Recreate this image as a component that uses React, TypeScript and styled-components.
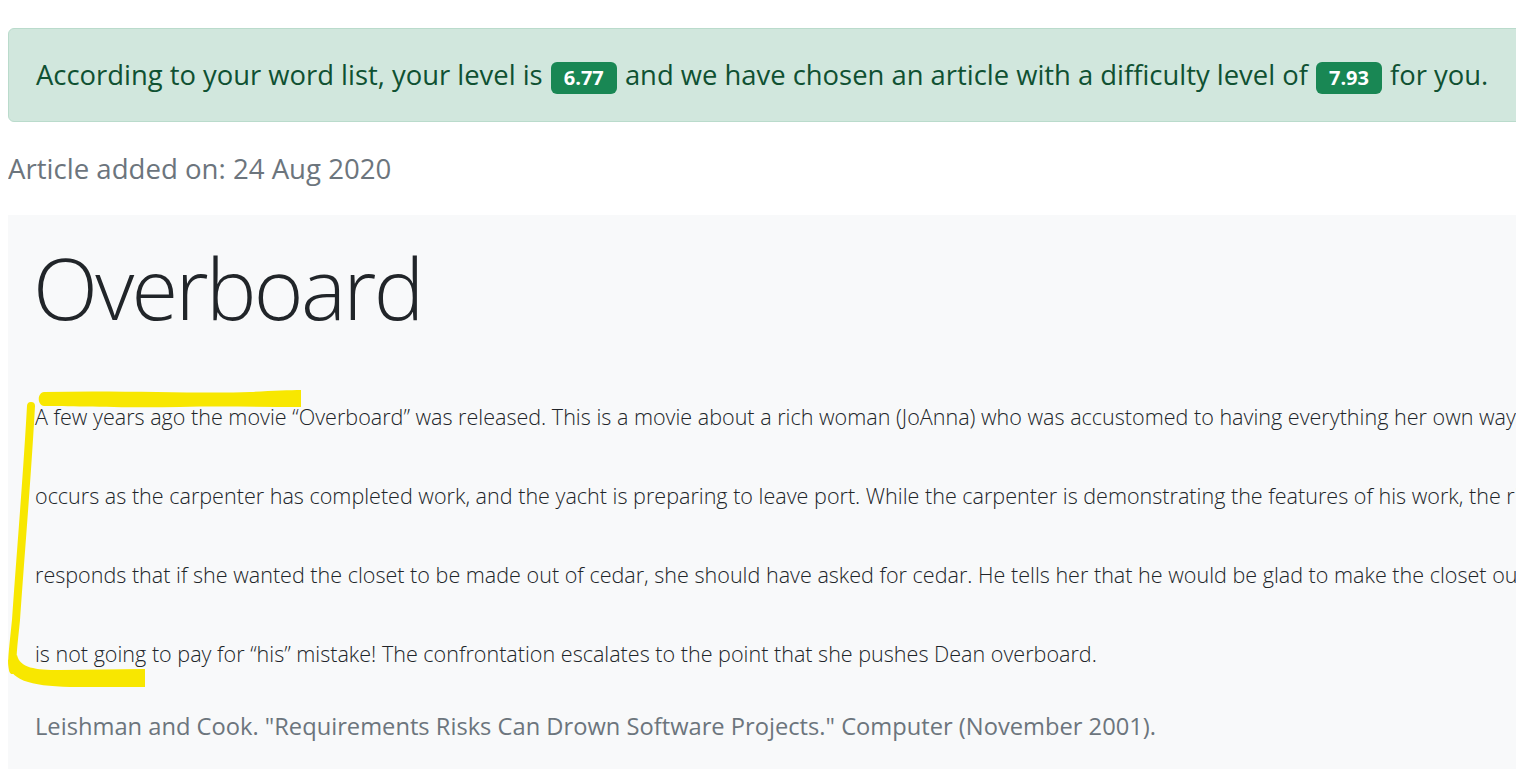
import styled, { createGlobalStyle } from 'styled-components';

const GlobalStyle = createGlobalStyle`
  html, body {
    overflow: hidden;
    scrollbar-width: none;
  }
  html {
    width: 100%;
  }
  body {
    margin: 8px 0 0 8px;
    background: #fff;
    font-family: "Open Sans", "Noto Sans", sans-serif;
  }
`;

const Frame = styled.div`
  width: 100vw;
  height: calc(100vh - 8px);
  overflow: hidden;
`;

const Page = styled.div`
  position: relative;
  width: 1640px;
  padding-top: 20px;
`;

const Alert = styled.div`
  background-color: #d1e7dd;
  border: 1px solid #badbcc;
  border-radius: 6px;
  color: #0f5132;
  padding: 26px 27px;
  font-size: 27.4px;
  line-height: 40px;
  white-space: nowrap;
`;

const Badge = styled.span`
  display: inline-block;
  background-color: #198754;
  color: #fff;
  font-weight: 700;
  font-size: 20px;
  line-height: 32px;
  height: 32px;
  padding: 0 13px;
  border-radius: 6px;
  vertical-align: middle;
  margin: 0 1px;
`;

const DateLine = styled.div`
  color: #6c757d;
  font-size: 27.6px;
  line-height: 40px;
  margin: 26px 0 27px;
`;

const ArticlePanel = styled.div`
  background-color: #f8f9fa;
  padding: 18px 27px 60px;
  min-height: 600px;
`;

const Title = styled.h1`
  margin: 0 0 0 -2px;
  font-weight: 300;
  font-size: 85px;
  letter-spacing: -2.7px;
  line-height: 109px;
  color: #212529;
`;

const Body = styled.p`
  margin: 35px 0 0;
  font-weight: 300;
  font-size: 21.55px;
  line-height: 79px;
  color: #212529;
  white-space: nowrap;
`;

const Source = styled.p`
  margin: 17px 0 0;
  font-size: 23.7px;
  line-height: 33px;
  color: #6c757d;
`;

const Marker = styled.svg`
  position: absolute;
  left: -8px;
  top: -8px;
  width: 320px;
  height: 700px;
  pointer-events: none;
`;

const lines = [
  'A few years ago the movie “Overboard” was released. This is a movie about a rich woman (JoAnna) who was accustomed to having everything her own way.',
  'occurs as the carpenter has completed work, and the yacht is preparing to leave port. While the carpenter is demonstrating the features of his work, the rich',
  'responds that if she wanted the closet to be made out of cedar, she should have asked for cedar. He tells her that he would be glad to make the closet out',
  'is not going to pay for “his” mistake! The confrontation escalates to the point that she pushes Dean overboard.',
];

export default function App() {
  return (
    <>
      <GlobalStyle />
      <Frame>
        <Page>
          <Alert>
            According to your word list, your level is <Badge>6.77</Badge> and we have chosen an article with a
            difficulty level of <Badge>7.93</Badge> for you.
          </Alert>
          <DateLine>Article added on: 24 Aug 2020</DateLine>
          <ArticlePanel>
            <Title>Overboard</Title>
            <Body>
              {lines.map((l, i) => (
                <span key={i}>
                  {l}
                  {i < lines.length - 1 && <br />}
                </span>
              ))}
            </Body>
            <Source>Leishman and Cook. "Requirements Risks Can Drown Software Projects." Computer (November 2001).</Source>
          </ArticlePanel>

          {/* yellow highlighter bracket, drawn in page coordinates */}
          <Marker viewBox="0 0 320 700">
            <path
              d="M44 392 C120 390 200 394 250 392 C270 391 290 390 301 390 L301 407 C260 407 220 406 180 407 C120 408 70 406 44 406 C37 405 37 393 44 392 Z"
              fill="#f8e700"
            />
            <path
              d="M31 406 C27 480 20 560 16 620 C13 650 11 662 13 670"
              fill="none"
              stroke="#f8e700"
              strokeWidth="8"
              strokeLinecap="round"
            />
            <path
              d="M8 660 C8 680 30 686 70 687 L145 687 L145 669 L60 670 C35 670 20 668 17 655 Z"
              fill="#f8e700"
            />
          </Marker>
        </Page>
      </Frame>
    </>
  );
}
